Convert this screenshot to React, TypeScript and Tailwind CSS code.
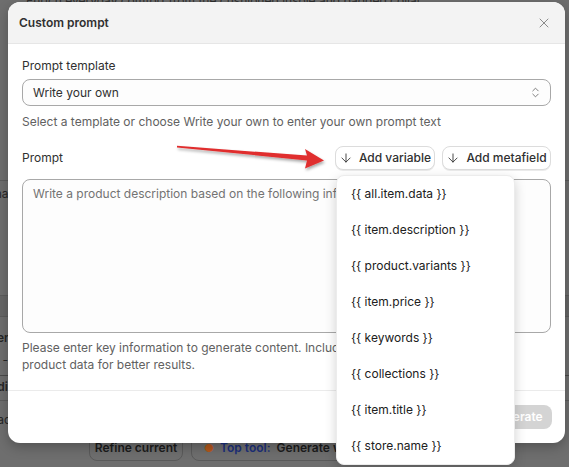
import { ChevronsUpDown, X, ArrowDown } from 'lucide-react';

const variables = [
  '{{ all.item.data }}',
  '{{ item.description }}',
  '{{ product.variants }}',
  '{{ item.price }}',
  '{{ keywords }}',
  '{{ collections }}',
  '{{ item.title }}',
  '{{ store.name }}',
];

function PageBehind() {
  // dimmed editor page that sits under the modal backdrop
  return (
    <div className="flex h-full w-full flex-col bg-[#6e6e6e] text-[12px] text-[#262626]">
      <div className="-mt-[8px] pl-[26px] text-[#2e2e2e]">
        Enrich everyday comfort from the cushioned insole and padded collar.
      </div>
      <div className="mt-[170px] flex h-[115px] flex-col border-t border-[#5c5c5c] pt-[4px]">
        <span className="-ml-[14px]">Chat</span>
      </div>
      <div className="h-[22px] border-y border-[#5c5c5c] bg-[#666666]" />
      <div className="flex flex-col pt-[12px]">
        <span className="-ml-[12px] font-semibold">Gener</span>
        <span className="-ml-[12px] mt-[4px]">to -</span>
        <div className="mt-[6px] border-t border-[#4a4a4a] pt-[2px]">
          <span className="-ml-[10px] font-semibold">Edi</span>
        </div>
        <div className="mt-[4px] border-t border-[#5c5c5c] pt-[10px]">
          <span className="-ml-[10px]">Each</span>
        </div>
      </div>
      <div className="mt-[6px] flex gap-[8px] pl-[89px]">
        <div className="flex h-[26px] w-[94px] items-center justify-center rounded-[8px] border border-[#5a5a5a] font-semibold text-[#1c1c1c]">
          Refine current
        </div>
        <div className="flex h-[26px] w-[300px] items-center gap-[6px] rounded-[8px] border border-[#5a5a5a] pl-[12px] font-semibold">
          <span className="text-[11px] text-[#b2571c]">●</span>
          <span className="text-[#1c2f7a]">Top tool:</span>
          <span className="text-[#1c1c1c]">Generate with AI</span>
        </div>
      </div>
    </div>
  );
}

function Arrow() {
  return (
    <svg className="pointer-events-none absolute left-0 top-0" width="569" height="467">
      <defs>
        <filter id="arrowShadow" x="-10%" y="-50%" width="120%" height="200%">
          <feDropShadow dx="1" dy="2" stdDeviation="1.5" floodColor="#000" floodOpacity="0.35" />
        </filter>
      </defs>
      <polygon
        points="177,145.8 307,155.6 305,149 324,160.5 305,168.5 307,160.4 177,147.4"
        fill="#e02e2e"
        filter="url(#arrowShadow)"
      />
    </svg>
  );
}

export default function App() {
  return (
    <div
      className="relative h-[467px] w-[569px] overflow-hidden"
      style={{ fontFamily: 'Inter, "Noto Sans", sans-serif' }}
    >
      <PageBehind />

      <div className="absolute left-[8px] top-[2px] flex h-[441px] w-[557px] flex-col rounded-[12px] bg-white shadow-[0_4px_12px_rgba(0,0,0,0.25)]">
        <div className="flex h-[42px] shrink-0 items-center justify-between rounded-t-[12px] border-b border-[#e6e6e6] bg-[#f3f3f3] pl-[11px] pr-[13px]">
          <h2 className="text-[12px] font-semibold text-[#303030]">Custom prompt</h2>
          <X size={16} strokeWidth={1.5} className="text-[#8a8a8a]" />
        </div>

        <div className="flex flex-1 flex-col px-[14px] pt-[14px] text-[12px] leading-[16px] text-[#303030]">
          <label>Prompt template</label>
          <div className="mt-[5px] flex h-[27px] items-center justify-between rounded-[8px] border border-[#a8a8a8] bg-[#fdfdfd] pl-[10px] pr-[8px]">
            <span>Write your own</span>
            <ChevronsUpDown size={13} strokeWidth={1.6} className="text-[#6b6b6b]" />
          </div>
          <p className="mt-[8px] text-[#616161]">
            Select a template or choose Write your own to enter your own prompt text
          </p>

          <div className="relative mt-[16px] flex h-[24px] items-center justify-between">
            <span>Prompt</span>
            <div className="flex gap-[7px]">
              <button className="flex h-[24px] w-[100px] items-center justify-center gap-[6px] rounded-[8px] border border-[#dcdcdc] bg-white font-medium shadow-[0_1px_0_rgba(0,0,0,0.08)]">
                <ArrowDown size={14} strokeWidth={1.5} />
                Add variable
              </button>
              <button className="flex h-[24px] w-[109px] items-center justify-center gap-[6px] rounded-[8px] border border-[#dcdcdc] bg-white font-medium shadow-[0_1px_0_rgba(0,0,0,0.08)]">
                <ArrowDown size={14} strokeWidth={1.5} />
                Add metafield
              </button>
            </div>

            <ul className="absolute left-[314px] top-[29px] z-10 flex w-[179px] flex-col rounded-[8px] border border-[#ececec] bg-white shadow-[0_4px_12px_rgba(0,0,0,0.18)]">
              {variables.map((v) => (
                <li key={v} className="flex h-[36px] items-center pl-[14px] text-[#202020]">
                  {v}
                </li>
              ))}
            </ul>
          </div>

          <div className="mt-[9px] h-[154px] shrink-0 rounded-[8px] border border-[#a8a8a8] bg-[#fdfdfd] px-[10px] pt-[6px] text-[#737373]">
            Write a product description based on the following information
          </div>
          <p className="mt-[6px] leading-[17px] text-[#616161]">
            Please enter key information to generate content. Include variables to include
            <br />
            product data for better results.
          </p>
        </div>

        <div className="flex h-[53px] shrink-0 items-center justify-end border-t border-[#ebebeb] pr-[13px]">
          <button className="h-[24px] w-[72px] rounded-[8px] bg-[#d4d4d4] text-[12px] font-semibold text-white">
            Generate
          </button>
        </div>
      </div>

      <Arrow />
    </div>
  );
}
